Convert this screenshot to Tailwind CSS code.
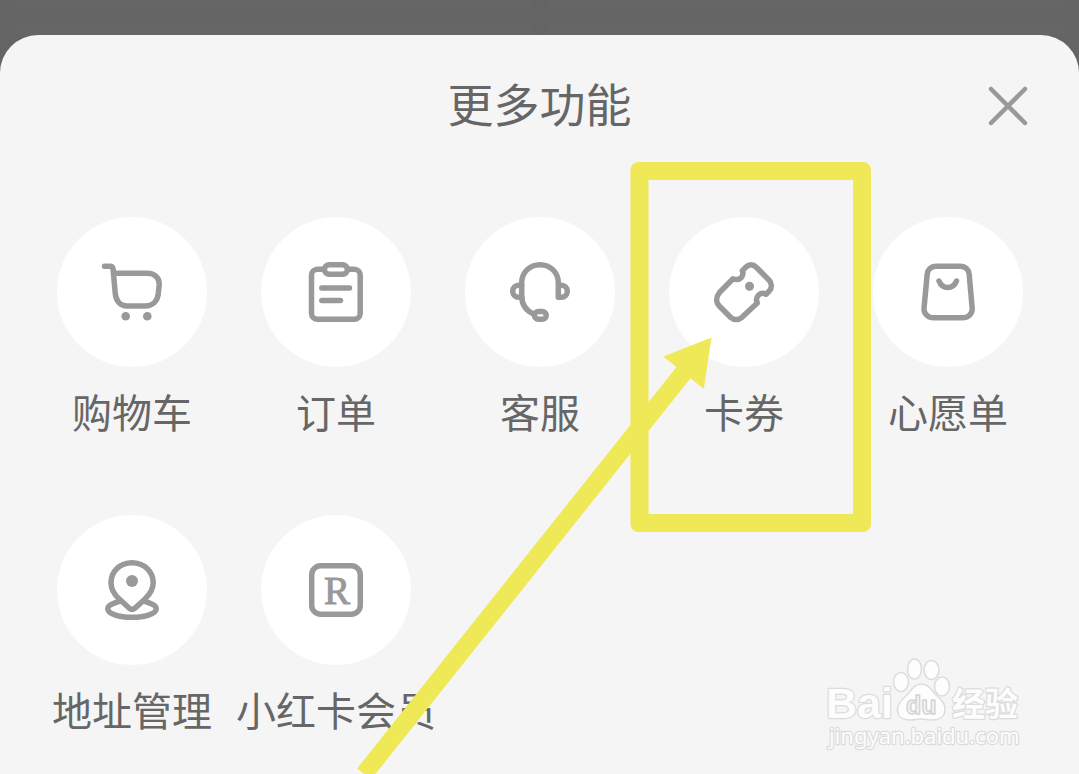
<!DOCTYPE html>
<html lang="zh-CN">
<head>
<meta charset="utf-8">
<meta name="viewport" content="width=device-width, initial-scale=1">
<title>更多功能</title>
<script src="https://cdn.jsdelivr.net/npm/@tailwindcss/browser@4"></script>
</head>
<body class="relative flex min-h-screen flex-col overflow-hidden bg-[#646464] font-['Noto_Sans_CJK_SC',sans-serif] text-[#666666]">

<!-- Dimmed cards behind the sheet -->
<div class="grid h-[35px] grid-cols-2 grid-rows-[9px_11px] gap-x-3.5 gap-y-[15px] px-3.5" aria-hidden="true">
  <div class="rounded-b-lg bg-[#666666]"></div>
  <div class="rounded-b-lg bg-[#666666]"></div>
  <div class="rounded-t-lg bg-[#666666]"></div>
  <div class="rounded-t-lg bg-[#666666]"></div>
</div>

<main class="grow rounded-t-[38px] bg-[#f5f5f5]">
  <header class="grid grid-cols-[1fr_auto_1fr] items-start px-[47px] pt-[37px]">
    <h1 class="col-start-2 text-[46px] leading-[60px]">更多功能</h1>
    <button type="button" aria-label="关闭" class="mt-2.5 justify-self-end">
      <svg class="size-12" viewBox="0 0 48 48" fill="none" stroke="#999" stroke-width="4.5" stroke-linecap="round"><path d="M7 7 41 41M41 7 7 41"/></svg>
    </button>
  </header>

  <div class="grid grid-cols-5 gap-y-20 pt-[85px] pr-[29px] pl-[30px]">
    <button type="button" class="flex flex-col items-center gap-5">
      <span class="rounded-full bg-white">
        <svg class="size-[150px]" viewBox="0 0 150 150" fill="none" stroke="#999" stroke-width="5.5" stroke-linecap="round" stroke-linejoin="round">
          <path d="M47.5 49.3H53C55 49.3 56 50.3 56.1 52.3L58.2 76C59 84 63 89 70 89H88C96 89 100.5 84 101.2 77L102.2 68C102.8 61 97.5 56.3 90.5 56.3H57"/>
          <g fill="#999" stroke="none"><circle cx="68.7" cy="99.3" r="4.3"/><circle cx="90.3" cy="99.3" r="4.3"/></g>
        </svg>
      </span>
      <span class="text-[40px] leading-[48px] whitespace-nowrap">购物车</span>
    </button>

    <button type="button" class="flex flex-col items-center gap-5">
      <span class="rounded-full bg-white">
        <svg class="size-[150px]" viewBox="0 0 150 150" fill="none" stroke="#999" stroke-width="5.5" stroke-linecap="round">
          <rect x="50.5" y="52.3" width="48.7" height="50" rx="6"/>
          <rect x="63.4" y="47.7" width="23" height="9.6" rx="4.8" fill="#fff"/>
          <path d="M60.8 71H88.5M60.8 83.5H79.5"/>
        </svg>
      </span>
      <span class="text-[40px] leading-[48px] whitespace-nowrap">订单</span>
    </button>

    <button type="button" class="flex flex-col items-center gap-5">
      <span class="rounded-full bg-white">
        <svg class="size-[150px]" viewBox="0 0 150 150" fill="none" stroke="#999" stroke-width="5.5" stroke-linecap="round" stroke-linejoin="round">
          <path d="M68.5 97C61 93.5 56.7 87 56.7 79V66C56.7 55.5 64.5 47.7 75 47.7S93.3 55.500 93.3 66V80.300H96.300A6 6 0 0 0 96.300 68.300H93.300"/>
          <path d="M56.700 68.300H53.700A6 6 0 0 0 53.700 80.300H56.700"/>
          <rect x="69.500" y="94.500" width="11.700" height="7.700" rx="3.800"/>
        </svg>
      </span>
      <span class="text-[40px] leading-[48px] whitespace-nowrap">客服</span>
    </button>

    <button type="button" class="flex flex-col items-center gap-5">
      <span class="rounded-full bg-white">
        <svg class="size-[150px]" viewBox="0 0 150 150" fill="none" stroke="#999" stroke-width="5.5" stroke-linejoin="round">
          <path d="M73.300 53.700 77 50C80 47 84 47 87 50L100.200 63.200C103 66 103 71 100.500 73.700L97 77.200C94.500 76 91.500 76 89.500 78.200C87.500 80.300 87 83.500 88.300 86L73 100.300C69.500 103.200 65 103.200 61.500 100.300L50.500 89.200C46.800 85.500 46.800 80 50.500 75.500L64 61.800C67 63 70.500 62.500 72.500 60.300C74 58.500 74.300 56 73.300 53.700Z"/>
          <circle cx="80.500" cy="69.300" r="4.500" fill="#999" stroke="none"/>
        </svg>
      </span>
      <span class="text-[40px] leading-[48px] whitespace-nowrap">卡券</span>
    </button>

    <button type="button" class="flex flex-col items-center gap-5">
      <span class="rounded-full bg-white">
        <svg class="size-[150px]" viewBox="0 0 150 150" fill="none" stroke="#999" stroke-width="5.5" stroke-linecap="round">
          <path d="M62.700 49.300H87.700A8.500 8.500 0 0 1 96.200 57.300L99.200 91.500A8.800 8.800 0 0 1 90.500 100.700H59.700A8.800 8.800 0 0 1 51 91.500L54.200 57.300A8.500 8.500 0 0 1 62.700 49.300Z"/>
          <path d="M66 64C69.500 72.700 80 72.700 83.500 64"/>
        </svg>
      </span>
      <span class="text-[40px] leading-[48px] whitespace-nowrap">心愿单</span>
    </button>

    <button type="button" class="flex flex-col items-center gap-5">
      <span class="rounded-full bg-white">
        <svg class="size-[150px]" viewBox="0 0 150 150" fill="none" stroke="#999" stroke-width="5.5" stroke-linejoin="round">
          <ellipse cx="75" cy="93.800" rx="24.300" ry="8.500"/>
          <path fill="#fff" d="M75 47.700C63 47.700 54 56.500 54 67.700C54 75.500 58.500 80.700 62.500 84.300L71.800 92.800C74 94.700 76.500 94.700 78.500 92.800L88 84C92 80 96.200 75 96.200 67.700C96.200 56.500 87 47.700 75 47.700Z"/>
          <circle cx="75" cy="66" r="6" fill="#999" stroke="none"/>
        </svg>
      </span>
      <span class="text-[40px] leading-[48px] whitespace-nowrap">地址管理</span>
    </button>

    <button type="button" class="flex flex-col items-center gap-5">
      <span class="rounded-full bg-white">
        <svg class="size-[150px]" viewBox="0 0 150 150">
          <rect x="50.700" y="50.700" width="48.600" height="48.600" rx="9" fill="none" stroke="#999" stroke-width="5.5"/>
          <text x="63" y="89" fill="#999" stroke="#999" stroke-width="1" class="font-['Liberation_Serif',serif] text-[39px]">R</text>
        </svg>
      </span>
      <span class="text-[40px] leading-[48px] whitespace-nowrap">小红卡会员</span>
    </button>
  </div>
</main>

<!-- Site watermark -->
<svg class="absolute right-[49px] bottom-[14px] h-[110px] w-[210px]" viewBox="0 0 210 110" role="img" aria-label="Baidu经验" fill="#fdfdfd" stroke="#dcdcdc" stroke-width="2.5" stroke-linejoin="round">
  <g paint-order="stroke">
    <text x="6" y="68" class="font-['Liberation_Sans',sans-serif] text-[43px] font-bold">Bai</text>
    <text x="132" y="66" class="font-['Noto_Sans_CJK_SC',sans-serif] text-[33px] font-bold">经验</text>
    <text x="9" y="94" class="font-['Noto_Sans',sans-serif] text-[22px]">jingyan.baidu.com</text>
  </g>
  <g stroke-width="1.500">
    <ellipse cx="94.500" cy="19" rx="7" ry="10"/>
    <ellipse cx="111.500" cy="20" rx="7.500" ry="9.500"/>
    <ellipse cx="81" cy="32" rx="7.500" ry="9.500"/>
    <ellipse cx="122" cy="36.500" rx="7.500" ry="9.500"/>
    <path d="M101 34C109 34 112 41 117 46C123 51 126 55 125 61C124 67 119 70 113 70C108 70 105 69 101 69S94 70 89 70C83 70 78 67 77.500 61C77 55 80 51 86 46C91 41 94 34 101 34Z"/>
    <text x="86" y="64" fill="#f5f5f5" stroke="#d4d4d4" class="font-['Liberation_Sans',sans-serif] text-[25px] font-bold">du</text>
  </g>
</svg>

<!-- Highlight frame and arrow -->
<svg class="pointer-events-none absolute top-0 left-0 h-auto w-full" viewBox="0 0 1079 774" aria-hidden="true" fill="#efe957">
  <path fill-rule="evenodd" d="M638.500 162H863A8 8 0 0 1 871 170V524A8 8 0 0 1 863 532H638.500A8 8 0 0 1 630.500 524V170A8 8 0 0 1 638.500 162ZM648.500 180V514H853V180Z"/>
  <path d="M711.500 337.500 703.800 389 690.500 378.300 371 779.500 357.200 768.400 676.500 367 663.300 356.500Z"/>
</svg>
</body>
</html>
